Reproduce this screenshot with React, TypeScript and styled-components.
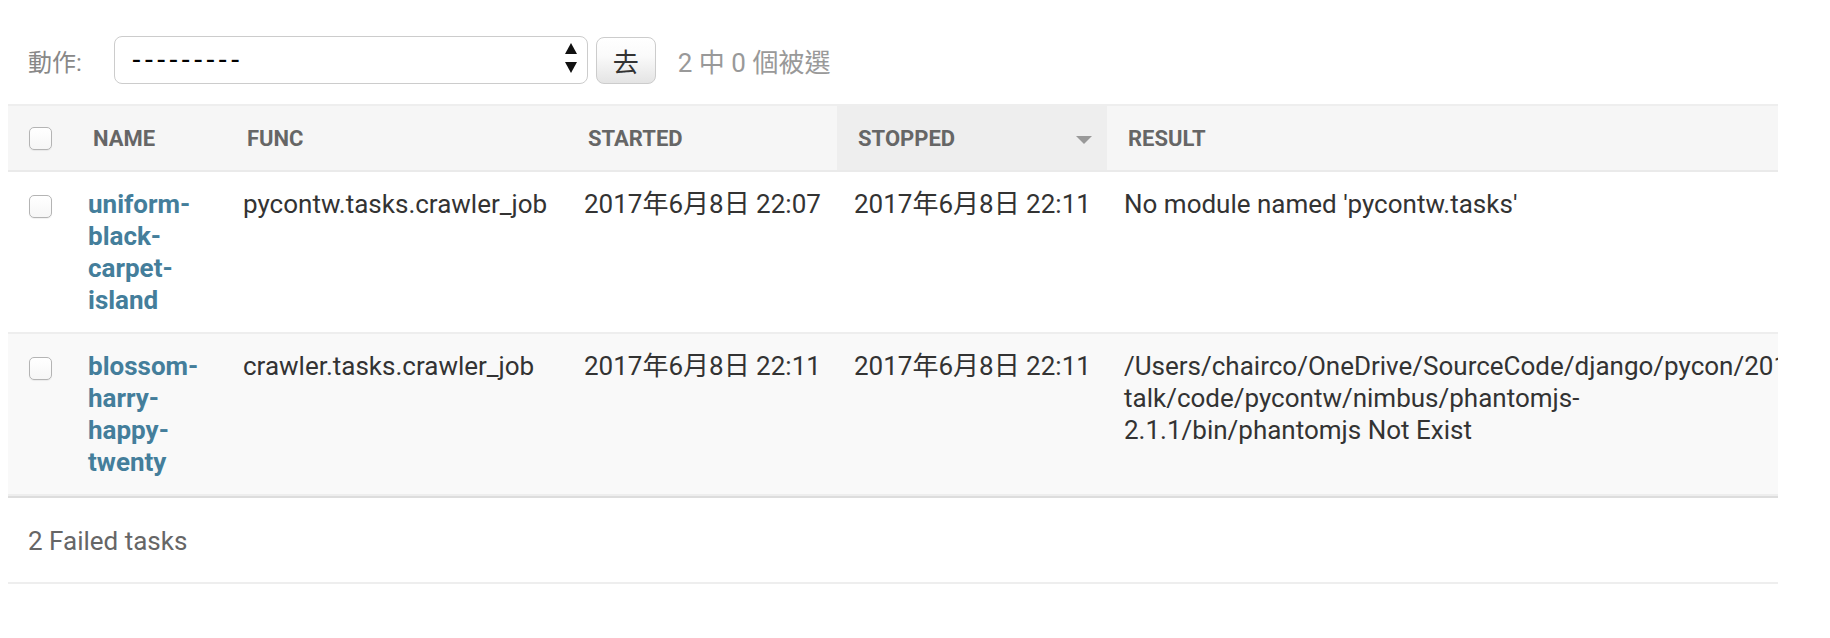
import styled, { createGlobalStyle } from "styled-components";

const GlobalStyle = createGlobalStyle`
  body {
    margin: 0;
    background: #fff;
    font-family: Roboto, "Noto Sans CJK TC", sans-serif;
  }
`;

type Task = {
  name: string;
  func: string;
  started: string;
  stopped: string;
  result: string[];
};

const tasks: Task[] = [
  {
    name: "uniform-black-carpet-island",
    func: "pycontw.tasks.crawler_job",
    started: "2017年6月8日 22:07",
    stopped: "2017年6月8日 22:11",
    result: ["No module named 'pycontw.tasks'"],
  },
  {
    name: "blossom-harry-happy-twenty",
    func: "crawler.tasks.crawler_job",
    started: "2017年6月8日 22:11",
    stopped: "2017年6月8日 22:11",
    result: [
      "/Users/chairco/OneDrive/SourceCode/django/pycon/2017-",
      "talk/code/pycontw/nimbus/phantomjs-",
      "2.1.1/bin/phantomjs Not Exist",
    ],
  },
];

const columns = [
  { label: "NAME", width: 154 },
  { label: "FUNC", width: 341 },
  { label: "STARTED", width: 270 },
  { label: "STOPPED", width: 270, sorted: true },
  { label: "RESULT", width: 671 },
];

const App = () => {
  return (
    <Page>
      <GlobalStyle />
      <Actions>
        <ActionLabel>動作:</ActionLabel>
        <SelectBox>
          <span>---------</span>
          <svg width="12" height="30" viewBox="0 0 12 30">
            <polygon points="6,0 12,11 0,11" fill="#111" />
            <polygon points="0,19 12,19 6,30" fill="#111" />
          </svg>
        </SelectBox>
        <GoButton>去</GoButton>
        <Counter>2 中 0 個被選</Counter>
      </Actions>

      <Table>
        <colgroup>
          <col style={{ width: 64 }} />
          {columns.map((c) => (
            <col key={c.label} style={{ width: c.width }} />
          ))}
        </colgroup>
        <thead>
          <tr>
            <HeadCell>
              <CheckHead>
                <Checkbox />
              </CheckHead>
            </HeadCell>
            {columns.map((c) => (
              <HeadCell key={c.label} $sorted={c.sorted}>
                <HeadText $sorted={c.sorted}>
                  <span>{c.label}</span>
                  {c.sorted && <SortArrow />}
                </HeadText>
              </HeadCell>
            ))}
          </tr>
        </thead>
        <tbody>
          {tasks.map((t, i) => (
            <Row key={t.name} $alt={i % 2 === 1}>
              <CheckCell>
                <Checkbox />
              </CheckCell>
              <NameCell>
                <a href="#">{t.name}</a>
              </NameCell>
              <Cell>{t.func}</Cell>
              <Cell>{t.started}</Cell>
              <Cell>{t.stopped}</Cell>
              <ResultCell>
                {t.result.map((line) => (
                  <div key={line}>{line}</div>
                ))}
              </ResultCell>
            </Row>
          ))}
        </tbody>
      </Table>

      <Paginator>2 Failed tasks</Paginator>
    </Page>
  );
};

const Page = styled.div`
  width: 1770px;
  margin-left: 8px;
  padding-top: 36px;
`;

const Actions = styled.div`
  display: flex;
  align-items: center;
  height: 48px;
  margin-bottom: 20px;
`;

const ActionLabel = styled.label`
  margin-left: 20px;
  margin-right: 32px;
  font-size: 24px;
  color: #888;
`;

const SelectBox = styled.div`
  box-sizing: border-box;
  width: 474px;
  height: 48px;
  display: flex;
  align-items: center;
  justify-content: space-between;
  padding: 0 10px 4px 17px;
  border: 1px solid #ccc;
  border-radius: 8px;
  background: #fff;

  span {
    font-family: "Liberation Sans", sans-serif;
    font-size: 28px;
    letter-spacing: 3px;
    color: #000;
    margin-top: 2px;
  }
`;

const GoButton = styled.button`
  box-sizing: border-box;
  width: 60px;
  height: 47px;
  margin-left: 8px;
  padding: 0;
  border: 1px solid #ccc;
  border-radius: 8px;
  background: linear-gradient(#fff 0%, #fafafa 40%, #e4e4e4 100%);
  font-family: "Noto Sans CJK TC", sans-serif;
  font-size: 26px;
  color: #333;
`;

const Counter = styled.span`
  margin-left: 22px;
  font-size: 26px;
  color: #999;
`;

const Table = styled.table`
  width: 1770px;
  table-layout: fixed;
  border-collapse: collapse;
`;

const HeadCell = styled.th<{ $sorted?: boolean }>`
  padding: 0;
  background: ${(p) => (p.$sorted ? "#eee" : "#f6f6f6")};
  border-top: 2px solid #eee;
  border-bottom: 2px solid #eaeaea;
  vertical-align: middle;
  text-align: left;
`;

const HeadText = styled.div<{ $sorted?: boolean }>`
  height: 64px;
  box-sizing: border-box;
  display: flex;
  align-items: center;
  justify-content: space-between;
  padding: 0 ${(p) => (p.$sorted ? "15px" : "20px")} 0 21px;
  font-size: 22px;
  font-weight: 700;
  color: #666;
  text-transform: uppercase;
`;

const CheckHead = styled.div`
  height: 64px;
  display: flex;
  align-items: center;
  justify-content: center;
`;

const SortArrow = styled.span`
  width: 0;
  height: 0;
  margin-top: 3px;
  border-left: 8px solid transparent;
  border-right: 8px solid transparent;
  border-top: 8px solid #999;
`;

const Checkbox = styled.span`
  display: inline-block;
  box-sizing: border-box;
  width: 23px;
  height: 23px;
  border: 1px solid #b4b4b4;
  border-radius: 5px;
  background: linear-gradient(#fff, #f6f6f6);
  box-shadow: 0 1px 1px rgba(0, 0, 0, 0.06);
  vertical-align: top;
`;

const Row = styled.tr<{ $alt?: boolean }>`
  background: ${(p) => (p.$alt ? "#f9f9f9" : "#fff")};
`;

const Cell = styled.td`
  padding: 16px 16px 16px 17px;
  border-bottom: 2px solid #eee;
  vertical-align: top;
  font-size: 26px;
  line-height: 32px;
  color: #333;
`;

const CheckCell = styled(Cell)`
  padding: 23px 0 0;
  text-align: center;
`;

const NameCell = styled(Cell)`
  padding-left: 16px;
  font-weight: 700;

  a {
    color: #447e9b;
    text-decoration: none;
  }
`;

const ResultCell = styled(Cell)`
  overflow: hidden;

  div {
    white-space: nowrap;
  }
`;

const Paginator = styled.div`
  padding: 21px 20px 19px;
  line-height: 44px;
  font-size: 26px;
  color: #666;
  border-top: 2px solid #ddd;
  border-bottom: 2px solid #eee;
`;

export default App;
